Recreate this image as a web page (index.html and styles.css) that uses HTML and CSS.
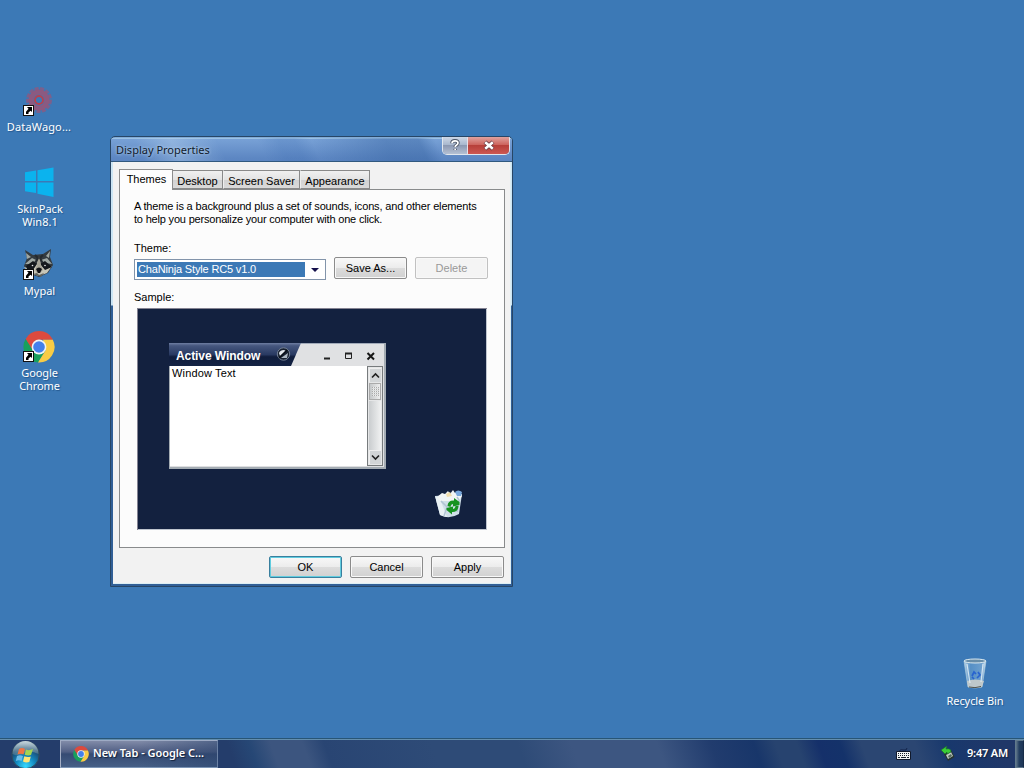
FILE: index.html
```html
<!DOCTYPE html>
<html lang="en">
<head>
<meta charset="utf-8">
<title>Desktop</title>
<link rel="stylesheet" href="styles.css">
</head>
<body>
<svg width="0" height="0" class="defs" aria-hidden="true">
  <defs>
    <symbol id="chrome" viewBox="0 0 32 32">
      <path d="M2.6 8A15.5 15.5 0 0 1 29.6 8L29.8 8.8H16L9 19.5Z" fill="#dc4a3e"/>
      <path d="M2.6 8A15.5 15.5 0 0 0 15 31.4L22 20L10 19.5Z" fill="#18a05c"/>
      <path d="M29.8 8.8A15.5 15.5 0 0 1 15 31.4L22.5 19.5L20 8.8Z" fill="#f9cc45"/>
      <circle cx="16" cy="16" r="7.4" fill="#f0f4f4"/>
      <circle cx="16" cy="16" r="5.8" fill="#4380ec"/>
    </symbol>
    <symbol id="shortcut" viewBox="0 0 11 11">
      <path d="M0 0H11V11H0Z" fill="#111"/><path d="M1 1H10V10H1Z" fill="#fff"/>
      <path d="M4 2H9V7L7.6 5.7L5.5 7.5V9H3V6.8L5.5 3.7Z" fill="#000"/>
    </symbol>
    <linearGradient id="bin" x2="1" y2="0"><stop stop-color="#dcecf5" stop-opacity=".85"/><stop offset=".3" stop-color="#6fa6d5" stop-opacity=".5"/><stop offset=".8" stop-color="#8db9df" stop-opacity=".6"/><stop offset="1" stop-color="#e8f3f8"/></linearGradient>
    <radialGradient id="orb" cx=".5" cy=".9" r=".9"><stop stop-color="#37d9ff"/><stop offset=".4" stop-color="#1386bd"/><stop offset=".75" stop-color="#1b456e"/><stop offset="1" stop-color="#7594a8"/></radialGradient>
    <linearGradient id="gloss" x2="0" y2="1"><stop stop-color="#c9d8df"/><stop offset="1" stop-color="#6f929e" stop-opacity=".4"/></linearGradient>
  </defs>
</svg>
<main class="desktop">
  <div class="shortcut datawagon">
    <svg width="32" height="32" viewBox="0 0 32 32"><g fill="none" stroke="#a5506f"><circle cx="16" cy="14" r="11.5" stroke-width="3" stroke-dasharray="4 1.5" opacity=".6"/><circle cx="16" cy="14" r="8" stroke-width="5" opacity=".75"/><circle cx="16" cy="14" r="4" stroke="#b9414f" stroke-width="2"/></g><use href="#shortcut" y="19" width="11" height="11"/></svg>
    <span>DataWago...</span>
  </div>
  <div class="shortcut skinpack">
    <svg width="32" height="32" viewBox="0 0 32 32"><path d="M1 6.3L12 4.5V15H1ZM13.5 4.2L29.5 1.5V15H13.5ZM1 16.5H12V27L1 25.2ZM13.5 16.5H29.5V31L13.5 27.7Z" fill="#0bb3ee"/></svg>
    <span>SkinPack</span><span>Win8.1</span>
  </div>
  <div class="shortcut mypal">
    <svg width="32" height="32" viewBox="0 0 32 32"><path d="M2 2L10 7L20 6L28 1L27 9L30 17L25 25L16 29L5 25L1 18L4 10Z" fill="#343b40"/><path d="M3 5L8 9L4 11ZM27 3L23 8L26 10ZM2 16L9 10L13 12L9 16ZM18 12L24 10L29 16L22 15Z" fill="#9ea6a2"/><path d="M1 19L9 21L13 16H18L22 21L29 18L24 25L16 28L6 25Z" fill="#c8c6b8"/><path d="M3 18L10 13L14 16L10 22L4 21ZM17 16L22 13L29 19L22 22Z" fill="#15181d"/><path d="M14 9L17 9L18 17L20 22L17 25H14L12 22L14 17Z" fill="#a6a498"/><path d="M12 7L15 10L13 14M20 7L17 10L19 14" fill="none" stroke="#252a2f" stroke-width="2"/><circle cx="9.5" cy="17.5" r=".8" fill="#eee"/><circle cx="22" cy="17.5" r=".8" fill="#eee"/><path d="M13 21Q16 18 19 21L17 25H15Z" fill="#101217"/><path d="M10 26L14 25L16 27L21 25L18 29Z" fill="#60635f"/><use href="#shortcut" y="21" width="11" height="11"/></svg>
    <span>Mypal</span>
  </div>
  <div class="shortcut googlechrome">
    <svg width="32" height="32" viewBox="0 0 32 32"><use href="#chrome" width="32" height="32"/><use href="#shortcut" y="20" width="11" height="11"/></svg>
    <span>Google</span><span>Chrome</span>
  </div>
  <div class="shortcut recycle">
    <svg width="32" height="32" viewBox="0 0 32 32"><path d="M5 4H27L23 30Q16 32 9 30Z" fill="url(#bin)" stroke="#a9c8db" stroke-width=".7"/><ellipse cx="16" cy="4" rx="11" ry="2" fill="#688da8" stroke="#dceaf0"/><path d="M8 24Q16 21 25 24L23 30Q16 32 9 30Z" fill="#c9cdcb" opacity=".9"/><path d="M10 30Q16 31.5 22 29.5" fill="none" stroke="#50534f"/><path d="M13 19L15 15L17 17M19 15L21 18L18 21M15 22L13 20" fill="none" stroke="#2864cf" stroke-width="1.7"/><path d="M8 7L11 26M24 7L22 25" stroke="#e9f4fa" stroke-width="1.2" opacity=".8"/></svg>
    <span>Recycle Bin</span>
  </div>

  <section class="dialog">
    <header class="titlebar">
      <span class="dialog-title">Display Properties</span>
      <div class="caption-buttons">
        <span class="help"><svg width="12" height="13" viewBox="0 0 12 13"><path d="M3 4.2Q3 1.8 6 1.8Q9 1.8 9 4.1Q9 5.3 7.3 6.3Q6.2 7 6.2 8M6.2 9.7V11" fill="none" stroke="#4b5364" stroke-width="3.4"/><path d="M3 4.2Q3 1.8 6 1.8Q9 1.8 9 4.1Q9 5.3 7.3 6.3Q6.2 7 6.2 8M6.2 9.7V11" fill="none" stroke="#fff" stroke-width="1.7"/></svg></span>
        <span class="close"><svg width="12" height="11" viewBox="0 0 12 11"><path d="M2 2L10 9M10 2L2 9" stroke="#673a43" stroke-width="4.2"/><path d="M2.2 2.2L9.8 8.8M9.8 2.2L2.2 8.8" stroke="#fff" stroke-width="2.5"/></svg></span>
      </div>
    </header>
    <div class="dialog-body">
      <nav class="tabs"><span class="tab active">Themes</span><span class="tab desk">Desktop</span><span class="tab saver">Screen Saver</span><span class="tab appear">Appearance</span></nav>
      <div class="panel">
        <p class="intro"><span class="line-a">A theme is a background plus a set of sounds, icons, and other elements</span><br><span class="line-b">to help you personalize your computer with one click.</span></p>
        <div class="label">Theme:</div>
        <div class="theme-row">
          <div class="combo"><span class="selection">ChaNinja Style RC5 v1.0</span><svg width="19" height="19" viewBox="0 0 19 19"><path d="M5 8H13L9 12Z" fill="#15104b"/></svg></div>
          <button class="btn save">Save As...</button>
          <button class="btn" disabled>Delete</button>
        </div>
        <div class="label sample">Sample:</div>
        <div class="preview">
          <div class="mini-window">
            <div class="mini-title">
              <svg class="mini-tab" width="133" height="23" viewBox="0 0 133 23"><defs><linearGradient id="navy" x2="0" y2="1"><stop stop-color="#6e7ea2"/><stop offset=".12" stop-color="#46577f"/><stop offset=".5" stop-color="#293a62"/><stop offset=".6" stop-color="#101d3c"/><stop offset="1" stop-color="#142344"/></linearGradient></defs><path d="M0 0H132L122 23H0Z" fill="url(#navy)"/><circle cx="114.5" cy="11" r="6.2" fill="#182130" stroke="#758296"/><path d="M110 10Q111 7 115 7L117 8L111 13Z" fill="#e4e9ed"/><path d="M119 10L118 15L112 15Z" fill="#aeb9c3"/><path d="M110 15L118 7" stroke="#060c14" stroke-width="1.5"/></svg>
              <span class="mini-name">Active Window</span>
              <svg class="mini-controls" width="62" height="20" viewBox="0 0 62 20"><path d="M3 14.5H9" stroke="#222" stroke-width="2"/><path d="M24.5 9.5H30.5V14.5H24.5Z" fill="none" stroke="#222"/><path d="M24 9.5H31" stroke="#222" stroke-width="2"/><path d="M46.5 9L53 15.5M53 9L46.5 15.5" stroke="#171717" stroke-width="2"/></svg>
            </div>
            <div class="mini-content"><span class="mini-text">Window Text</span>
              <div class="scroll"><span class="scroll-btn"><svg width="9" height="7"><path d="M1 5.5L4.5 2L8 5.5" fill="none" stroke="#222" stroke-width="1.6"/></svg></span><span class="thumb"></span><span class="track"></span><span class="scroll-btn"><svg width="9" height="7"><path d="M1 1.5L4.5 5L8 1.5" fill="none" stroke="#222" stroke-width="1.6"/></svg></span></div>
            </div>
          </div>
          <svg class="sample-bin" width="28" height="30" viewBox="0 0 28 30"><path d="M0 7L27 5L24 25Q14 31 5 26Z" fill="#cfdfe8"/><path d="M0 7L5 10L12 28L5 26Z" fill="#e9f1f5"/><path d="M2 8L7 4L10 5L13 2L15 5L18 1L20 4L25 2L27 7L24 12L5 12Z" fill="#f1f5f5"/><path d="M11 5L15 3L17 7L12 8Z" fill="#f3dfad"/><path d="M20 3Q23 0 27 3L26 7L22 7Z" fill="#79a9de"/><path d="M6 12L12 18L9 27M22 8L24 11L22 23" fill="none" stroke="#b1c5d4" stroke-width="1.5"/><path d="M12.5 17Q13 11 19 11.5V9L24.5 13V16L18 17.5V15Q16 15 15.5 18ZM23.5 17Q23 23.5 17 23V25.5L11.5 21V19L18 17.5V20Q20 20 20.5 17Z" fill="#169320"/></svg>
        </div>
      </div>
      <div class="actions"><button class="btn default">OK</button><button class="btn">Cancel</button><button class="btn">Apply</button></div>
    </div>
  </section>
</main>
<footer class="taskbar">
  <svg class="start" width="29" height="28" viewBox="0 0 29 28"><circle cx="14.5" cy="15" r="13.7" fill="url(#orb)" stroke="#304c5c"/><path d="M1.5 14A13 13 0 0 1 27.5 14Q19 10 14.5 13Q7 17 1.5 14Z" fill="url(#gloss)"/><path d="M8 9Q11 7 14 9L12.5 14.5Q9.5 13 6.5 14.5Z" fill="#ef7544"/><path d="M15 9.5Q18 11 22 9L20 15Q17 16 13.7 14.8Z" fill="#a5d451"/><path d="M6 16Q9 14.5 12 16L10.5 21Q8 19.5 4.8 21Z" fill="#6bbce8"/><path d="M13.3 16.3Q16.5 17.8 19.8 16.5L18.3 22Q15 23 12 21.5Z" fill="#ffe474"/></svg>
  <div class="task"><svg width="16" height="16"><use href="#chrome"/></svg><span>New Tab - Google C...</span></div>
  <div class="tray">
    <svg class="keyboard" width="17" height="13" viewBox="0 0 17 13"><path d="M5 4Q4 1 8 2T12 0" fill="none" stroke="#15244b"/><path d="M1.5 3.5H15.5V11.5H1.5Z" fill="#f3f5f5" stroke="#10192c"/><path d="M3 5.5H14M3 7.5H14" stroke="#17212c" stroke-dasharray="1 1"/><path d="M3 9.5H5M6 9.5H11M12 9.5H14" stroke="#17212c"/></svg>
    <svg class="usb" width="14" height="15" viewBox="0 0 14 15"><path d="M3 8L10 4L13.5 11L7 15Z" fill="#26342f"/><path d="M5 9L10 6L12 10L7 13Z" fill="#c2cfc5"/><path d="M7 10L10 8L11 10L8 12Z" fill="#536b60"/><path d="M0 4L6 0L5 3Q10 2 10 6L6 8L6 6L4 8Z" fill="#3bcf36" stroke="#1b6d2b" stroke-width=".6"/></svg>
    <span class="clock">9:47 AM</span>
  </div>
  <span class="show-desktop"></span>
</footer>
</body>
</html>
```
FILE: styles.css
```css
* { box-sizing: border-box; }
html, body { width: 1024px; height: 768px; margin: 0; overflow: hidden; }
body { display: flex; flex-direction: column; background: #3c79b6; font: 11px/13px "Liberation Sans", sans-serif; color: #000; }
svg { display: block; flex: none; }
.defs { position: absolute; }
.desktop { position: relative; flex: 1; }

.shortcut { position: absolute; display: flex; width: 78px; flex-direction: column; align-items: center; color: #fff; font: 11px/13px "Noto Sans", sans-serif; text-shadow: 1px 1px 1px #25588e; white-space: nowrap; }
.shortcut svg { margin-bottom: 4px; }
.datawagon { left: 0; top: 86px; letter-spacing: .15px; }
.datawagon svg { margin-bottom: 2px; }
.skinpack { left: 1px; top: 166px; }
.mypal { left: 0; top: 248px; }
.mypal span { margin-left: 1px; }
.googlechrome { left: 0; top: 331px; letter-spacing: -.1px; }
.googlechrome svg { margin-bottom: 3px; }
.googlechrome span { margin-left: 1px; }
.recycle { left: 936px; top: 657px; letter-spacing: -.1px; }
.recycle svg { margin-bottom: 5px; }

.dialog { position: absolute; left: 110px; top: 136px; width: 403px; height: 451px; display: flex; flex-direction: column; padding-top: 1px; border: 1px solid #274666; border-radius: 5px 5px 0 0; background: linear-gradient(#82abd7 0 24px, #cce5f4 25px 168px, #315f96 169px); overflow: hidden; }
.titlebar { display: flex; height: 24px; flex: none; justify-content: space-between; padding: 0 2px 0 5px; border-bottom: 1px solid #31597f; background: linear-gradient(65deg, transparent 8%, #b9d4ee66 17%, transparent 28% 38%, #3767ad33 43% 47%, transparent 51%, #315f9d66 69% 77%, transparent 81%), linear-gradient(#9bc2e4 0 1px, #78a1d6 1px, #5c86c2 90%); }
.dialog-title { padding-top: 5px; font: 11px/13px "Noto Sans", sans-serif; color: #101a2c; text-shadow: 0 0 3px #c9e1f5; }
.caption-buttons { display: flex; width: 68px; height: 18px; margin-top: -1px; border: 1px solid #e1e6ed; border-top: 0; border-radius: 0 0 5px 5px; overflow: hidden; }
.caption-buttons span { display: flex; align-items: center; justify-content: center; }
.help { width: 25px; background: linear-gradient(#ced8e7, #a9b8ce 45%, #8996b0 46%, #b5c0d3); border-right: 1px solid #e8e0e8; }
.close { flex: 1; background: linear-gradient(#e0a29e, #cd655e 45%, #b53e38 46%, #cd5751); }
.dialog-body { display: flex; flex: 1; flex-direction: column; margin: 0 1px 2px 2px; padding: 7px 6px 0; background: #f2f2f2; border: solid #dceef4; border-width: 0 1px 1px 0; }
.tabs { position: relative; z-index: 1; display: flex; height: 20px; align-items: flex-end; flex: none; }
.tab { height: 19px; padding-top: 4px; border: 1px solid #898989; border-left-color: #eee; background: linear-gradient(#f0f0f0, #e3e3e3 50%, #d2d2d2 52%, #dadada); text-align: center; }
.tab.active { width: 54px; height: 21px; padding: 3px 0 0 1px; margin-bottom: -1px; border-color: #8d8d8d; border-bottom: 0; background: #fdfdfd; }
.desk { width: 50px; border-left: 0; }
.saver { width: 77px; }
.appear { width: 70px; }
.panel { height: 359px; width: 386px; padding: 10px 14px 0; border: 1px solid #898b8c; background: #fcfcfc; flex: none; }
.intro { margin: 0 0 16px; white-space: nowrap; }
.line-a { letter-spacing: -.163px; }
.line-b { letter-spacing: -.185px; }
.label { height: 13px; }
.theme-row { display: flex; align-items: flex-start; margin-top: 2px; gap: 8px; }
.combo { display: flex; width: 192px; height: 21px; margin-top: 2px; border: 1px solid #8294aa; background: #fff; }
.selection { width: 170px; height: 15px; margin: 2px 1px 0 2px; padding: 1px; color: #fff; background: #3c79b6; letter-spacing: -.16px; }
.btn { height: 22px; width: 73px; padding: 0; border: 1px solid #8b8b8b; border-radius: 2px; background: linear-gradient(#f8f8f8, #ececec 49%, #dcdcdc 50%, #d1d1d1); box-shadow: inset 0 0 0 1px #f8f8f8; font: inherit; color: #000; text-align: center; }
.btn:disabled { color: #999; border-color: #c1c1c1; background: #f4f4f4; }
.sample { margin-top: 11px; }
.preview { position: relative; width: 350px; height: 222px; margin: 4px 0 0 3px; border: solid #848392; border-width: 1px 0 0 1px; background: #13213f; }
.preview::after { content: ""; position: absolute; inset: 0; border: solid #bfc5cf; border-width: 0 1px 1px 0; }
.mini-window { position: absolute; left: 31px; top: 34px; width: 217px; height: 126px; display: flex; flex-direction: column; background: #dedfe1; border: solid #a4acb3; border-width: 0 2px 2px 1px; }
.mini-title { display: flex; position: relative; height: 23px; justify-content: space-between; border-top: 1px solid #a1aab9; background: #e0e1e3; }
.mini-tab { position: absolute; left: -1px; top: -1px; }
.mini-name { position: relative; margin: 6px 0 0 6px; color: #fff; font: bold 12px/13px "Liberation Sans", sans-serif; letter-spacing: -.08px; }
.mini-controls { margin-right: 1px; }
.mini-content { display: flex; flex: 1; justify-content: space-between; margin: 0 1px 1px 0; background: #fff; }
.mini-text { padding: 1px 0 0 2px; letter-spacing: .15px; }
.scroll { display: flex; flex-direction: column; width: 16px; padding: 1px; border: 1px solid #777b7d; background: #e5e6e7; }
.scroll-btn { display: flex; height: 14px; align-items: center; justify-content: center; background: #d2d5d7; border: solid #eee; border-width: 1px 0 0 1px; }
.thumb { height: 17px; margin: 1px 0; border: 1px solid #aaa; background: repeating-linear-gradient(transparent 0 1px, #dadcdd 1px 2px) center / 7px 9px no-repeat, repeating-linear-gradient(90deg, #aaa 0 1px, #eee 1px 2px) center / 7px 9px no-repeat, linear-gradient(90deg, #c4c7c9, #eee); }
.track { flex: 1; background: linear-gradient(90deg, #cacdcf, #f0f1f1); }
.sample-bin { position: absolute; left: 297px; top: 180px; }
.actions { display: flex; justify-content: flex-end; gap: 8px; margin-top: 8px; }
.default { border-color: #397f9e; box-shadow: inset 0 0 0 1px #61ccdf; }

.taskbar { position: relative; display: flex; height: 29px; border-top: 1px solid #648fae; background: linear-gradient(70deg, #243d6b 0 22%, #264775 24%, #3c557f 26% 29%, #294573 31%, #2e4b77 41% 49%, #3d5681 54% 62%, #213c6e 67%, #18366a 71%, #27436f 73% 75%, #15306a 77%, #14326a 79%, #2b4672 81% 86%, #18386d 89%, #203768 94%); background-size: 1064px 100%; box-shadow: 0 -1px #285575; }
.start { margin: 0 0 0 11px; }
.task { display: flex; align-items: center; width: 158px; height: 28px; margin-left: 20px; padding-left: 12px; gap: 4px; border: 1px solid #8291b0; border-color: #9eabc5 #6b81a4 #7b94b5 #a4aec4; background: linear-gradient(90deg, transparent 50%, #29436d88), linear-gradient(#818ba8, #515f84 42%, #364b73 50%, #465f86); color: #fff; font: 600 11px/13px "Noto Sans", sans-serif; text-shadow: 1px 1px 1px #14233d; white-space: nowrap; letter-spacing: -.04px; }
.task span { margin-top: -3px; }
.tray { display: flex; margin-left: auto; align-items: center; color: #fff; }
.keyboard { margin-right: 29px; }
.usb { margin: -1px 12px 0 0; }
.clock { font: 600 11px/13px "Noto Sans", sans-serif; text-shadow: 1px 1px 1px #14233d; margin: -3px 7px 0 0; letter-spacing: -.2px; }
.show-desktop { width: 9px; border: 1px solid #61798c; border-right-color: #172c48; background: linear-gradient(90deg, #60778b, #233e60 45%, #1e3657); }
```
